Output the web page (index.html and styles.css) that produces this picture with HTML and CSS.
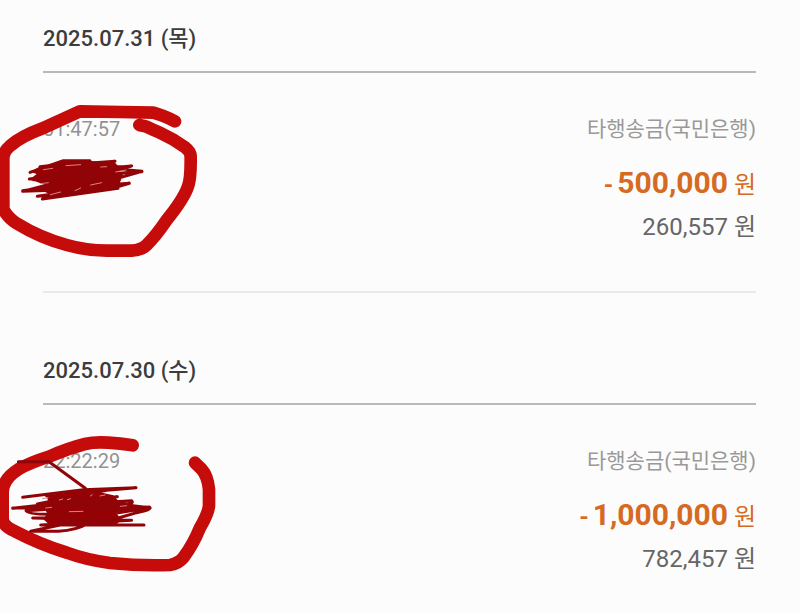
FILE: index.html
```html
<!DOCTYPE html>
<html lang="ko">
<head>
<meta charset="utf-8">
<meta name="viewport" content="width=device-width, initial-scale=1">
<title>거래내역</title>
<link rel="stylesheet" href="styles.css">
</head>
<body>
<main class="history">
  <section class="day">
    <h2 class="date">2025.07.31 (목)</h2>
    <article class="entry">
      <time class="time">01:47:57</time>
      <div class="detail">
        <p class="kind">타행송금(국민은행)</p>
        <p class="amount"><span class="sign">-</span><strong>500,000</strong> 원</p>
        <p class="balance">260,557 원</p>
      </div>
    </article>
    <svg class="ink ink-first" viewBox="0 0 660 540" aria-hidden="true">
      <path class="marker" d="M525 94Q490 76 460 68L360 66L240 64L130 114Q60 140 30 168Q10 185 10 205V358Q25 385 50 400Q120 443 200 465Q260 482 320 482H395Q425 480 440 465Q470 435 500 390Q550 328 563 292Q573 270 572 200Q572 185 555 172Q520 146 480 128Q455 117 440 110L418 105"/>
      <path class="fill" d="M118 230L185 213H270L345 218L360 234L348 255L364 268L352 295L240 312L155 315L122 300L135 285L90 268L110 252L92 246Z"/>
      <path class="scribble" d="M90 247L190 212H270L120 230L345 214L150 249L395 228L88 267L426 245L100 269L365 258L68 302L388 280L112 319L354 295L127 327L180 300L68 304L130 288L355 267M350 230L390 230L330 245M342 268L426 244L350 237M165 316L300 300M355 290L388 280"/>
      <path class="glint" d="M198 227L242 224M302 231L320 230M347 246L378 240M272 285L305 278M151 314L182 306M225 302L242 294M130 239L158 235M122 281L145 278"/>
    </svg>
  </section>
  <section class="day">
    <h2 class="date">2025.07.30 (수)</h2>
    <article class="entry">
      <time class="time">22:22:29</time>
      <div class="detail">
        <p class="kind">타행송금(국민은행)</p>
        <p class="amount"><span class="sign">-</span><strong>1,000,000</strong> 원</p>
        <p class="balance">782,457 원</p>
      </div>
    </article>
    <svg class="ink ink-second" viewBox="0 0 690 480" aria-hidden="true">
      <path class="marker" d="M398 58Q360 52 325 50Q285 47 255 54Q200 68 150 91Q90 110 55 130Q20 152 11 180Q8 190 8 205V280Q10 300 45 316Q120 355 200 380Q260 402 330 411Q420 420 510 417Q535 413 550 395Q580 355 600 305Q624 265 627 240V190Q623 150 605 130L585 110"/>
      <path class="scribble" d="M55 107H147L256 187"/>
      <path class="fill" d="M140 208L200 200L260 190L340 208L355 225L390 235L350 260L362 282L348 298L150 298L130 280L142 262L130 244L145 230Z"/>
      <path class="scribble" d="M68 214L250 191L408 185L320 193L112 234L352 212L38 247L395 224Q405 236 365 235L78 254Q82 268 190 264L448 243Q460 250 410 260L355 276L98 276L395 283L122 297L432 297H180L92 316H175Q230 313 265 292M38 246H410M140 210L355 228M355 260L448 245L380 237"/>
      <path class="glint" d="M208 257L249 256M178 222L188 219M202 221L212 218M271 210L277 206M300 210L315 207M137 246L155 244M128 218L144 215M361 241L380 239"/>
    </svg>
  </section>
</main>
</body>
</html>
```

FILE: styles.css
```css
* {
  box-sizing: border-box;
}

body {
  margin: 0;
  background: #fcfcfc;
  color: #666;
  font-family: Roboto, "Noto Sans CJK KR", sans-serif;
}

h2,
p {
  margin: 0;
}

.history {
  overflow: hidden;
}

.day {
  position: relative;
  padding: 0 44px 0 43px;
}

.day + .day {
  margin-top: 39px;
}

.date {
  padding: 23px 0 16px;
  border-bottom: 2px solid #b9b9b9;
  color: #3c3c3c;
  font-size: 22px;
  font-weight: 500;
  line-height: 32px;
}

.entry {
  display: flex;
  justify-content: space-between;
  align-items: flex-start;
  padding: 40px 0 44px;
  border-bottom: 2px solid #e9e9eb;
}

/* The closing rule is drawn only between days */
.day:last-child .entry {
  padding-bottom: 24px;
  border-bottom: 0;
}

.time {
  color: #929292;
  font-size: 20px;
  line-height: 32px;
}

.detail {
  text-align: right;
}

.kind {
  color: #999;
  font-size: 21px;
  line-height: 32px;
}

.amount {
  margin-top: 16px;
  color: #d66a22;
  font-size: 24px;
  line-height: 44px;
}

.amount strong {
  font-size: 30px;
  font-weight: 700;
}

.sign {
  margin-right: 4px;
  font-weight: 700;
}

.balance {
  font-size: 24px;
  line-height: 40px;
}

/* Pen marks lie over the entry text */
.ink {
  position: absolute;
  left: 0;
  fill: none;
  stroke-linecap: round;
  stroke-linejoin: round;
  pointer-events: none;
}

.ink-first {
  top: 90px;
  width: 220px;
}

.ink-second {
  top: 94px;
  width: 230px;
}

.marker {
  stroke: #c60b0b;
  stroke-width: 38;
}

.scribble {
  stroke: #900408;
  stroke-width: 9;
}

.fill {
  fill: #980003;
}

.glint {
  stroke: #d98383;
  stroke-width: 3;
}
```
